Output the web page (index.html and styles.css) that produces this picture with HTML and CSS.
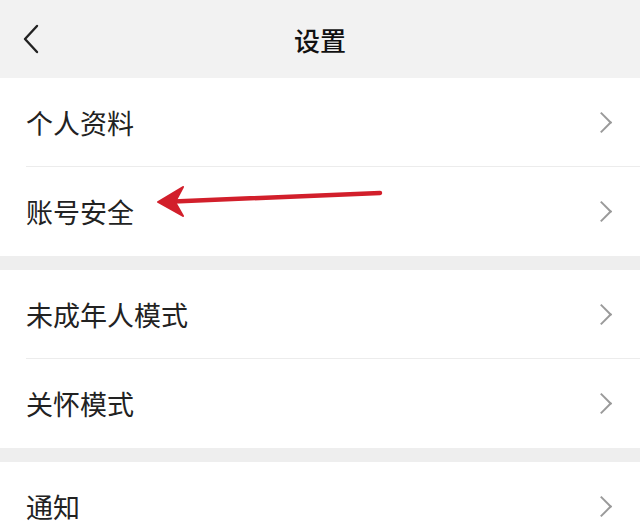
FILE: index.html
```html
<!DOCTYPE html>
<html lang="zh-CN">

<head>
    <meta charset="UTF-8">
    <meta name="viewport" content="width=device-width, initial-scale=1.0">
    <title>设置</title>
    <link rel="stylesheet" href="styles.css">
</head>

<body>
    <header class="nav">
        <span class="back">
            <svg width="16" height="30" viewBox="0 0 16 30">
                <path d="M14 2 L2 15 L14 28" fill="none" stroke="#222" stroke-width="2.4" stroke-linecap="round" stroke-linejoin="round"/>
            </svg>
        </span>
        <h1 class="title">设置</h1>
        <span></span>
    </header>

    <div class="group">
        <div class="row"><span>个人资料</span><i class="chev"></i></div>
        <div class="row"><span>账号安全</span><i class="chev"></i></div>
    </div>

    <div class="group">
        <div class="row"><span>未成年人模式</span><i class="chev"></i></div>
        <div class="row"><span>关怀模式</span><i class="chev"></i></div>
    </div>

    <div class="group">
        <div class="row"><span>通知</span><i class="chev"></i></div>
    </div>

    <!-- red annotation arrow pointing at 账号安全 -->
    <svg class="mark" width="640" height="529" viewBox="0 0 640 529">
        <path d="M380 193 L162 202" fill="none" stroke="#d21f2b" stroke-width="4.5" stroke-linecap="round"/>
        <path d="M183 187 L158 202 L183 216 L175 202 Z" fill="#d21f2b" stroke="#d21f2b" stroke-width="2" stroke-linejoin="round"/>
    </svg>
</body>

</html>
```

FILE: styles.css
```css
body {
    margin: 0;
    background-color: #eeeeee;
    font-family: "Noto Sans CJK SC", "Noto Sans", sans-serif;
    color: #222;
    position: relative;
    height: 529px;
    overflow: hidden;
}

.nav {
    height: 78px;
    background-color: #f2f2f2;
    display: grid;
    grid-template-columns: 1fr auto 1fr;
    align-items: center;
}

.back {
    padding-left: 23px;
    display: flex;
    align-items: center;
}

.title {
    margin: 0;
    font-size: 26px;
    font-weight: 500;
    color: #111;
}

.group {
    background: white;
    padding-left: 26px;
    margin-bottom: 14px;
}

.row {
    height: 89px;
    display: flex;
    align-items: center;
    justify-content: space-between;
    padding-right: 31px;
    border-bottom: 1px solid #ececec;
    box-sizing: border-box;
    font-size: 27px;
}

.row:last-child {
    border-bottom: none;
}

.chev {
    width: 13px;
    height: 13px;
    border-top: 2px solid #9a9a9a;
    border-right: 2px solid #9a9a9a;
    transform: rotate(45deg);
}

.mark {
    position: absolute;
    left: 0;
    top: 0;
    pointer-events: none;
}
```
